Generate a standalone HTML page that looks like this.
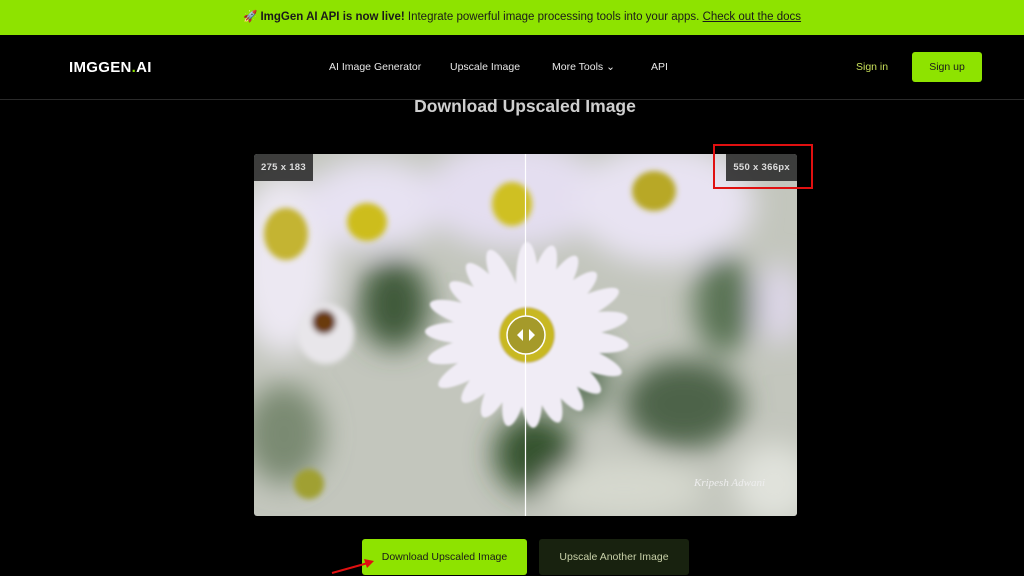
<!DOCTYPE html>
<html><head><meta charset="utf-8"><style>
*{margin:0;padding:0;box-sizing:border-box}
body{width:1024px;height:576px;overflow:hidden;background:#000;font-family:"Liberation Sans",sans-serif;position:relative}
.banner{position:absolute;left:0;top:0;width:1024px;height:35px;background:#8ee300;color:#1a1a1a;font-size:11.5px;text-align:center;line-height:35px;padding-left:20px}
.banner u{color:#1a1a1a}
.nav{position:absolute;top:35px;left:0;width:1024px;height:65px;border-bottom:1px solid #2a2a2a}
.logo{position:absolute;left:69px;top:24px;color:#fff;font-weight:bold;font-size:15px;letter-spacing:0.3px}
.logo span{color:#8ee300}
.links{position:absolute;top:26px;color:#e8e8e8;font-size:10.5px}
.signin{position:absolute;left:856px;top:26px;color:#c8e05a;font-size:10.5px}
.signup{position:absolute;left:912px;top:17px;width:70px;height:30px;background:#8ee300;border-radius:3px;color:#1a1a1a;font-size:10.5px;text-align:center;line-height:30px}
h1{position:absolute;top:96px;width:1050px;left:0;text-align:center;color:#cfcfcf;font-size:17.5px;font-weight:bold}
.img{position:absolute;left:254px;top:154px;width:543px;height:362px;border-radius:3px;overflow:hidden}
.tag{position:absolute;background:rgba(45,45,45,.9);color:#ddd;font-size:9.5px;font-weight:bold;height:27px;line-height:27px;padding:0 7px;letter-spacing:.3px}
.btn{position:absolute;top:539px;height:36px;border-radius:3px;font-size:10.5px;text-align:center;line-height:36px}
</style></head><body>
<div class="banner">🚀 <b>ImgGen AI API is now live!</b> Integrate powerful image processing tools into your apps. <u>Check out the docs</u></div>
<div class="nav">
<div class="logo">IMGGEN<span>.</span>AI</div>
<div class="links" style="left:329px">AI Image Generator</div>
<div class="links" style="left:450px">Upscale Image</div>
<div class="links" style="left:552px">More Tools &#8964;</div>
<div class="links" style="left:651px">API</div>
<div class="signin">Sign in</div>
<div class="signup">Sign up</div>
</div>
<h1>Download Upscaled Image</h1>
<div class="img">
<svg width="543" height="362" viewBox="0 0 543 362">
<defs>
<filter id="b" x="-50%" y="-50%" width="200%" height="200%"><feGaussianBlur stdDeviation="14"/></filter>
<filter id="s" x="-50%" y="-50%" width="200%" height="200%"><feGaussianBlur stdDeviation="3"/></filter>
<filter id="m" x="-50%" y="-50%" width="200%" height="200%"><feGaussianBlur stdDeviation="1"/></filter>
</defs>
<rect width="543" height="362" fill="#c3c6bd"/>
<g filter="url(#b)">
<ellipse cx="430" cy="250" rx="60" ry="45" fill="#4d6448"/>
<ellipse cx="140" cy="150" rx="35" ry="45" fill="#3f5a3b"/>
<ellipse cx="280" cy="300" rx="40" ry="40" fill="#34522f"/>
<ellipse cx="30" cy="280" rx="40" ry="50" fill="#7a8a72"/>
<ellipse cx="470" cy="150" rx="30" ry="50" fill="#5a7355"/>
<ellipse cx="330" cy="220" rx="25" ry="40" fill="#5a7256"/>
<ellipse cx="370" cy="335" rx="80" ry="30" fill="#d5d8ce"/>
<ellipse cx="520" cy="330" rx="40" ry="40" fill="#e0e2db"/>
<ellipse cx="30" cy="110" rx="50" ry="90" fill="#ece8f2"/>
<ellipse cx="120" cy="50" rx="70" ry="45" fill="#e7e2f2"/>
<ellipse cx="260" cy="40" rx="90" ry="55" fill="#e4def0"/>
<ellipse cx="410" cy="50" rx="90" ry="60" fill="#e8e3f2"/>
<ellipse cx="525" cy="150" rx="25" ry="40" fill="#dcd6e6"/>
</g>
<g filter="url(#s)">
<ellipse cx="32" cy="80" rx="22" ry="26" fill="#c4b430"/>
<ellipse cx="113" cy="68" rx="20" ry="19" fill="#cdbd1e"/>
<ellipse cx="258" cy="50" rx="20" ry="22" fill="#cfc020"/>
<ellipse cx="400" cy="37" rx="22" ry="20" fill="#b8a828"/>
<ellipse cx="72" cy="180" rx="28" ry="30" fill="#e8e6ea"/>
<ellipse cx="70" cy="168" rx="12" ry="12" fill="#6a3a10"/>
<ellipse cx="55" cy="330" rx="15" ry="15" fill="#a0a030"/>
</g>
<g transform="translate(273,181)" filter="url(#m)">
<g fill="#f0ecf5">
<ellipse cx="0" cy="-55" rx="11" ry="38" transform="rotate(0)"/>
<ellipse cx="0" cy="-55" rx="11" ry="38" transform="rotate(16)"/>
<ellipse cx="0" cy="-55" rx="11" ry="38" transform="rotate(32)"/>
<ellipse cx="0" cy="-55" rx="11" ry="38" transform="rotate(48)"/>
<ellipse cx="0" cy="-60" rx="11" ry="42" transform="rotate(64)"/>
<ellipse cx="0" cy="-60" rx="11" ry="42" transform="rotate(80)"/>
<ellipse cx="0" cy="-60" rx="11" ry="42" transform="rotate(96)"/>
<ellipse cx="0" cy="-60" rx="11" ry="42" transform="rotate(112)"/>
<ellipse cx="0" cy="-55" rx="11" ry="38" transform="rotate(128)"/>
<ellipse cx="0" cy="-55" rx="11" ry="38" transform="rotate(144)"/>
<ellipse cx="0" cy="-55" rx="11" ry="38" transform="rotate(160)"/>
<ellipse cx="0" cy="-55" rx="11" ry="38" transform="rotate(176)"/>
<ellipse cx="0" cy="-55" rx="11" ry="38" transform="rotate(192)"/>
<ellipse cx="0" cy="-55" rx="11" ry="38" transform="rotate(208)"/>
<ellipse cx="0" cy="-55" rx="11" ry="38" transform="rotate(224)"/>
<ellipse cx="0" cy="-60" rx="11" ry="42" transform="rotate(240)"/>
<ellipse cx="0" cy="-60" rx="11" ry="42" transform="rotate(256)"/>
<ellipse cx="0" cy="-60" rx="11" ry="42" transform="rotate(272)"/>
<ellipse cx="0" cy="-60" rx="11" ry="42" transform="rotate(288)"/>
<ellipse cx="0" cy="-55" rx="11" ry="38" transform="rotate(304)"/>
<ellipse cx="0" cy="-55" rx="11" ry="38" transform="rotate(320)"/>
<ellipse cx="0" cy="-55" rx="11" ry="38" transform="rotate(336)"/>
</g>
<circle r="28" fill="#c8b820"/>
</g>
<text x="440" y="332" fill="#eee" font-family="Liberation Serif,serif" font-style="italic" font-size="11">Kripesh Adwani</text>
<line x1="271.5" y1="0" x2="271.5" y2="362" stroke="#fff" stroke-width="1.2"/>
<circle cx="272" cy="181" r="19" fill="#a59a2a" stroke="#fff" stroke-width="1.5"/>
<path d="M269 175 L263 181 L269 187Z M275 175 L281 181 L275 187Z" fill="#fff"/>
</svg>
<div class="tag" style="left:0;top:0">275 x 183</div>
<div class="tag" style="right:0;top:0">550 x 366px</div>
</div>
<div style="position:absolute;left:713px;top:144px;width:100px;height:45px;border:2px solid #e01010"></div>
<div class="btn" style="left:362px;width:165px;background:#8ee300;color:#1a1a1a">Download Upscaled Image</div>
<div class="btn" style="left:539px;width:150px;background:#18220f;color:#c8d0a8">Upscale Another Image</div>
<svg style="position:absolute;left:330px;top:555px" width="50" height="21"><line x1="2" y1="18" x2="38" y2="8" stroke="#e01010" stroke-width="2"/><path d="M44 6 L34 4 L37 13Z" fill="#e01010"/></svg>
</body></html>
